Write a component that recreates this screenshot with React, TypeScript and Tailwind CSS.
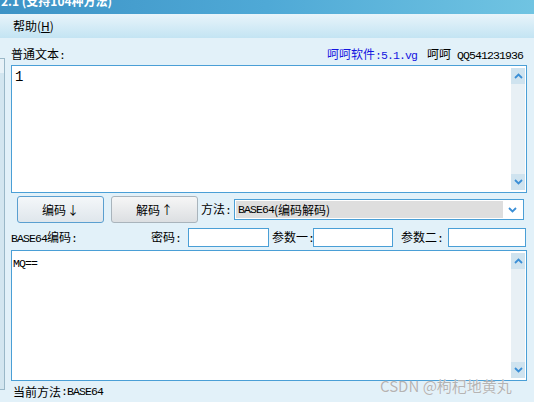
import React from 'react';

const cjk = '"Noto Sans CJK SC", "DejaVu Sans", sans-serif';

// half-width latin like SimSun: 6px per glyph
const M: React.FC<{ children: React.ReactNode; className?: string }> = ({ children, className }) => (
  <span className={`[font-family:'Liberation_Mono',monospace] text-[11.5px] tracking-[-0.9px] ${className ?? ''}`}>{children}</span>
);

const Chevron: React.FC<{ up?: boolean }> = ({ up }) => (
  <svg width="9" height="6" viewBox="0 0 9 6">
    <path d={up ? 'M1 5 L4.5 1.5 L8 5' : 'M1 1 L4.5 4.5 L8 1'} fill="none" stroke="#3b8fd6" strokeWidth="1.8" />
  </svg>
);

const ScrollBar: React.FC = () => (
  <div className="absolute right-[1px] top-[2px] bottom-[2px] w-[14px] bg-[#e8f0f5] flex flex-col justify-between">
    <div className="h-[16px] bg-[#cfe3ef] flex items-center justify-center">
      <Chevron up />
    </div>
    <div className="h-[16px] bg-[#cfe3ef] flex items-center justify-center">
      <Chevron />
    </div>
  </div>
);

const App: React.FC = () => {
  return (
    <div
      className="w-[534px] h-[402px] overflow-hidden flex flex-col bg-[#e2f1f9] text-[12px] text-black relative"
      style={{ fontFamily: cjk }}
    >
      {/* title bar, cut off at top */}
      <div className="h-[14px] overflow-hidden bg-gradient-to-r from-[#3d93c6] via-[#4fa9d6] to-[#70c4e2]">
        <div className="-mt-[8px] pl-[1px] text-white font-bold text-[12px] leading-[18px]">2.1 (支持104种方法)</div>
      </div>

      {/* menu */}
      <div className="h-[24px] flex items-center pl-[13px] bg-gradient-to-b from-[#e8f4fa] to-[#c3e4f3]">
        <span>
          帮助(<span className="underline">H</span>)
        </span>
      </div>

      <div className="flex-1 flex">
        {/* window behind at left edge */}
        <div className="w-[5px] mt-[20px] mb-[12px] border border-l-0 border-[#9ab8c8] bg-[#d3e6f0] flex flex-col">
          <div className="h-[14px] bg-[#e8f2f8]"></div>
        </div>

        <div className="flex-1 pl-[6px] pr-[7px] flex flex-col">
          <div className="h-[27px] flex items-end justify-between pb-[1px] leading-[16px]">
            <span>
              普通文本<M>:</M>
            </span>
            <span className="pr-[4px]">
              <span className="text-[#1515e0]">
                呵呵软件<M>:5.1.vg</M>
              </span>
              <span className="ml-[10px]">呵呵</span>
              <M className="ml-[6px]">QQ541231936</M>
            </span>
          </div>

          {/* text area 1 */}
          <div className="h-[128px] relative bg-white border border-[#4a9fd6]">
            <div className="pl-[3px] pt-[2px] leading-[16px]">
              <M className="text-[14px]">1</M>
            </div>
            <ScrollBar />
          </div>

          {/* buttons row */}
          <div className="h-[33px] flex items-center">
            <button className="ml-[6px] w-[87px] h-[27px] rounded-[3px] border border-[#5a9fd0] bg-gradient-to-b from-[#f4f7f9] to-[#dfe6ec]">
              编码<span className="ml-[1px]">↓</span>
            </button>
            <button className="ml-[7px] w-[87px] h-[27px] rounded-[3px] border border-[#a9b4bc] bg-gradient-to-b from-[#f6f6f6] to-[#dcdfe2]">
              解码<span className="ml-[1px]">↑</span>
            </button>
            <span className="ml-[3px]">
              方法<M>:</M>
            </span>
            <div className="ml-[3px] w-[290px] h-[21px] border border-[#4a9fd6] bg-white flex items-center p-[1px]">
              <div className="flex-1 h-full bg-[#dedede] flex items-center pl-[2px] leading-[16px]">
                <M>BASE64</M>(编码解码)
              </div>
              <div className="w-[19px] flex items-center justify-center">
                <Chevron />
              </div>
            </div>
          </div>

          {/* params row */}
          <div className="h-[24px] flex items-center pb-[1px]">
            <span className="w-[140px]">
              <M>BASE64</M>编码<M>:</M>
            </span>
            <span>
              密码<M>:</M>
            </span>
            <div className="ml-[7px] w-[81px] h-[19px] border border-[#4a9fd6] bg-white"></div>
            <span className="ml-[3px]">
              参数一<M>:</M>
            </span>
            <div className="ml-[-1px] w-[80px] h-[19px] border border-[#4a9fd6] bg-white"></div>
            <span className="ml-[8px]">
              参数二<M>:</M>
            </span>
            <div className="ml-[5px] w-[78px] h-[19px] border border-[#4a9fd6] bg-white"></div>
          </div>

          {/* text area 2 */}
          <div className="h-[131px] relative bg-white border border-[#4a9fd6]">
            <div className="pl-[1px] pt-[3px] leading-[16px]">
              <M>MQ==</M>
            </div>
            <ScrollBar />
          </div>

          <div className="flex-1 flex items-center pl-[2px]">
            当前方法<M>:BASE64</M>
          </div>
        </div>
      </div>

      {/* watermark */}
      <div className="absolute left-[380px] top-[375px] text-[15px] text-[#b4b4b4] [text-shadow:0_0_1px_#ffffff]">
        CSDN @枸杞地黄丸
      </div>
    </div>
  );
};

export default App;
